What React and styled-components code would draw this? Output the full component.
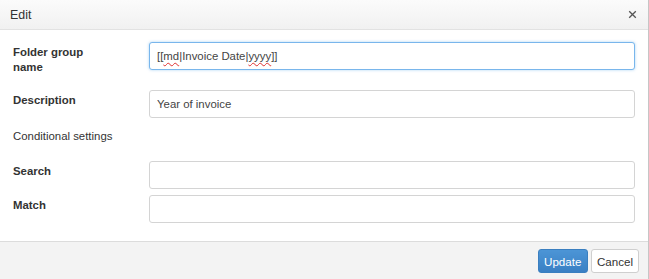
import styled, { createGlobalStyle } from 'styled-components';

const GlobalStyle = createGlobalStyle`
  html, body {
    margin: 0;
    padding: 0;
    background: #fff;
  }
  body {
    font-family: "Liberation Sans", Arial, sans-serif;
    font-size: 11.4px;
    color: #333;
  }
`;

const Dialog = styled.div`
  width: 648px;
  height: 279px;
  border-right: 1px solid #c6c6c6;
  display: flex;
  flex-direction: column;
  background: #fff;
`;

const Header = styled.div`
  height: 29px;
  border-bottom: 1px solid #e2e2e2;
  background: linear-gradient(to bottom, #fbfbfb 0%, #f1f1f1 100%);
  display: flex;
  align-items: center;
  justify-content: space-between;
  padding: 0 11px 0 10px;
`;

const Title = styled.span`
  font-size: 12.4px;
  color: #333;
`;

const Close = styled.button`
  border: 0;
  background: none;
  padding: 0;
  width: 9px;
  height: 9px;
  display: flex;
  cursor: pointer;
  margin-bottom: 1px;
`;

const Body = styled.div`
  flex: 1;
  padding: 12px 13px 0 13px;
  display: flex;
  flex-direction: column;
`;

const Row = styled.div`
  display: grid;
  grid-template-columns: 136px 1fr;
  grid-template-rows: 28px;
  margin-bottom: ${({ gap }) => gap}px;
`;

const Label = styled.label`
  font-weight: bold;
  font-size: 11.4px;
  line-height: 15px;
  padding-top: 3px;
  width: 85px;
  color: #333;
`;

const Note = styled.div`
  font-size: 11.4px;
  line-height: 15px;
  color: #333;
  margin: 1px 0 17px;
`;

const fieldStyles = `
  box-sizing: border-box;
  width: 100%;
  height: 28px;
  padding: 0 7px;
  border: 1px solid #d4d4d4;
  border-radius: 3px;
  font-family: "Liberation Sans", Arial, sans-serif;
  font-size: 11.4px;
  color: #444;
  background: #fff;
  outline: none;
`;

const Input = styled.input`
  ${fieldStyles}
`;

const FocusedBox = styled.div`
  ${fieldStyles}
  display: flex;
  align-items: center;
  border-color: #79b6ec;
  box-shadow: 0 0 3px rgba(102, 175, 233, 0.55);
  white-space: pre;
`;

const Misspelt = styled.span`
  text-decoration: underline wavy #e03030;
  text-decoration-thickness: 1px;
  text-decoration-skip-ink: none;
  text-underline-offset: 2px;
`;

const Footer = styled.div`
  height: 38px;
  border-top: 1px solid #dcdcdc;
  background: #f3f3f3;
  box-sizing: border-box;
  display: flex;
  justify-content: flex-end;
  align-items: flex-start;
  gap: 3px;
  padding: 7px 9px 0 0;
`;

const Button = styled.button`
  height: 24px;
  padding: 0 ${({ primary }) => (primary ? 5.5 : 5)}px;
  border-radius: 3px;
  font-family: "Liberation Sans", Arial, sans-serif;
  font-size: 11.6px;
  cursor: pointer;
  border: 1px solid ${({ primary }) => (primary ? '#3a7fc0' : '#cfcfcf')};
  color: ${({ primary }) => (primary ? '#fff' : '#333')};
  background: ${({ primary }) =>
    primary ? 'linear-gradient(to bottom, #4c95d6 0%, #3a80c4 100%)' : '#fff'};
`;

function App() {
  return (
    <>
      <GlobalStyle />
      <Dialog>
        <Header>
          <Title>Edit</Title>
          <Close aria-label="Close">
            <svg width="9" height="9" viewBox="0 0 9 9">
              <path d="M1.2 1.2L7.8 7.8M7.8 1.2L1.2 7.8" stroke="#555" strokeWidth="1.3" />
            </svg>
          </Close>
        </Header>
        <Body>
          <Row gap={20}>
            <Label>Folder group name</Label>
            <FocusedBox role="textbox">
              [[<Misspelt>md</Misspelt>|Invoice Date|<Misspelt>yyyy</Misspelt>]]
            </FocusedBox>
          </Row>
          <Row gap={10}>
            <Label>Description</Label>
            <Input defaultValue="Year of invoice" />
          </Row>
          <Note>Conditional settings</Note>
          <Row gap={6}>
            <Label>Search</Label>
            <Input />
          </Row>
          <Row gap={0}>
            <Label>Match</Label>
            <Input />
          </Row>
        </Body>
        <Footer>
          <Button primary>Update</Button>
          <Button>Cancel</Button>
        </Footer>
      </Dialog>
    </>
  );
}

export default App;
